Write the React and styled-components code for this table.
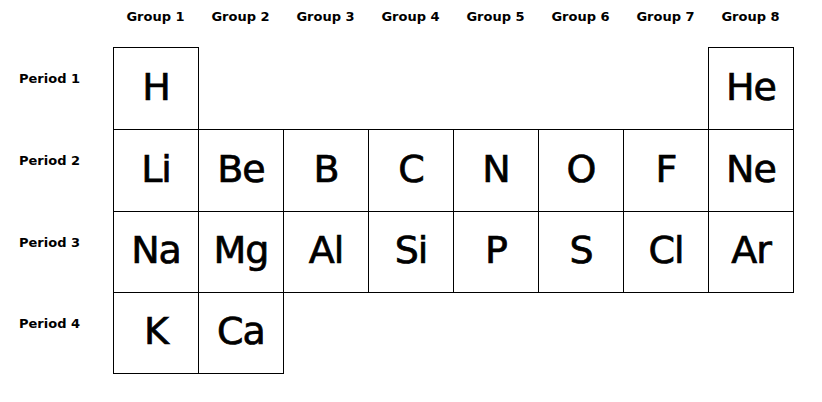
import React from 'react'
import styled, { createGlobalStyle } from 'styled-components'

const GlobalStyle = createGlobalStyle`
  body {
    margin: 0;
    background: #fff;
    font-family: "Comic Sans MS", "DejaVu Sans", sans-serif;
  }
`

const Table = styled.div`
  display: grid;
  grid-template-columns: 113px repeat(8, 85px);
  grid-template-rows: 47px 82px 82px 81px 81px;
  width: 822px;
  height: 402px;
`

const GroupLabel = styled.div`
  font-size: 13px;
  font-weight: bold;
  color: #000;
  text-align: center;
  padding-top: 9px;
`

const PeriodLabel = styled.div`
  grid-column: 1;
  font-size: 13px;
  font-weight: bold;
  color: #000;
  padding: 24px 0 0 19px;
  white-space: nowrap;
`

const Blank = styled.div``

const Cell = styled.div`
  border: 1px solid #000;
  margin: 0 -1px -1px 0;
  display: flex;
  align-items: center;
  justify-content: center;
  padding-bottom: 4px;
  font-size: 38px;
  color: #000;
  letter-spacing: -1px;
  -webkit-text-stroke: 0.7px #000;
`

const groups = [1, 2, 3, 4, 5, 6, 7, 8]

const periods = [
  ['H', null, null, null, null, null, null, 'He'],
  ['Li', 'Be', 'B', 'C', 'N', 'O', 'F', 'Ne'],
  ['Na', 'Mg', 'Al', 'Si', 'P', 'S', 'Cl', 'Ar'],
  ['K', 'Ca', null, null, null, null, null, null],
]

export default function App() {
  return (
    <>
      <GlobalStyle />
      <Table>
        <Blank />
        {groups.map(g => (
          <GroupLabel key={g}>Group {g}</GroupLabel>
        ))}
        {periods.map((row, i) => (
          <React.Fragment key={i}>
            <PeriodLabel>Period {i + 1}</PeriodLabel>
            {row.map((sym, j) =>
              sym ? <Cell key={j}>{sym}</Cell> : <Blank key={j} />
            )}
          </React.Fragment>
        ))}
      </Table>
    </>
  )
}
